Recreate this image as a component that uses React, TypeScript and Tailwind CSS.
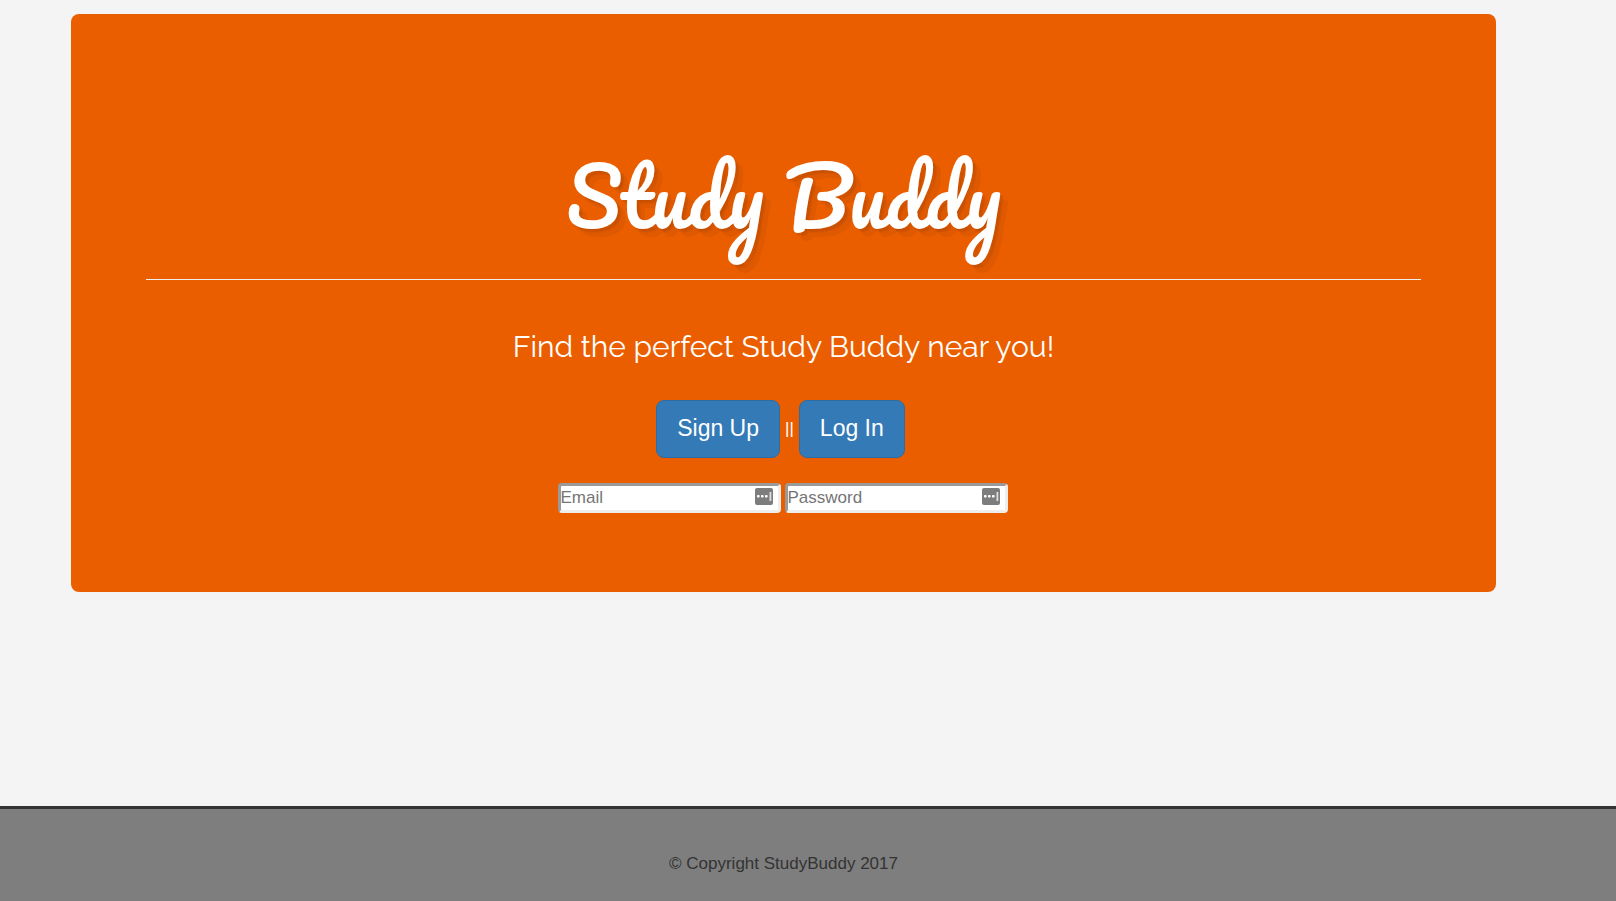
type CredentialFieldProps = {
  id: string;
  label: string;
  type: "email" | "password";
};

function AutofillIcon() {
  return (
    <svg
      aria-hidden="true"
      viewBox="0 0 18 18"
      className="pointer-events-none absolute top-1 right-2 size-[18px]"
    >
      <rect width="18" height="17" y="1" rx="2" fill="#7d7d7d" />
      <rect x="2" y="8" width="2.6" height="2.6" rx="0.8" fill="#fff" />
      <rect x="6" y="8" width="2.6" height="2.6" rx="0.8" fill="#fff" />
      <rect x="10" y="8" width="2.6" height="2.6" rx="0.8" fill="#fff" />
      <rect x="14.5" y="5" width="1.8" height="9" fill="#dedede" />
    </svg>
  );
}

function CredentialField({ id, label, type }: CredentialFieldProps) {
  return (
    <div className="relative">
      <input
        id={id}
        type={type}
        aria-label={label}
        placeholder={label}
        className="block h-[30px] w-[223px] rounded border-3 border-t-[#9a9a9a] border-r-[#eeeeee] border-b-[#eeeeee] border-l-[#9a9a9a] bg-white text-[17px] leading-6 text-black placeholder:text-[#757575]"
      />
      <AutofillIcon />
    </div>
  );
}

export default function App() {
  return (
    <div className="flex min-h-screen flex-col bg-[#f4f4f4] font-['Liberation_Sans',Arial,sans-serif] text-[#333333]">
      <main className="grow pt-3.5 pr-[120px] pl-[71px]">
        <section className="rounded-lg bg-[#eb5e00] px-[75px] pt-28 pb-[79px] text-center text-white">
          <h1 className="pb-[13px] font-['Pacifico','Lato',cursive] text-[79px] leading-[140px] font-medium [text-shadow:3px_3px_2px_rgba(0,0,0,0.1),8px_8px_1px_rgba(0,0,0,0.05)]">
            Study Buddy
          </h1>
          <hr className="border-t border-[#eeeeee]" />
          <p className="mt-[47px] font-['Raleway','Lato',sans-serif] text-[30px] leading-10">
            Find the perfect Study Buddy near you!
          </p>
          <div className="mt-[33px] flex items-center justify-center gap-[5px] pr-1.5 text-[17px]">
            <button
              type="button"
              className="rounded-lg border border-[#2e6da4] bg-[#337ab7] px-5 pt-[11px] pb-[13px] text-[23px] leading-8"
            >
              Sign Up
            </button>
            <span>||</span>
            <button
              type="button"
              className="rounded-lg border border-[#2e6da4] bg-[#337ab7] px-5 pt-[11px] pb-[13px] text-[23px] leading-8"
            >
              Log In
            </button>
          </div>
          <form className="mt-[25px] flex justify-center gap-1 pr-0.5">
            <CredentialField id="email" label="Email" type="email" />
            <CredentialField id="password" label="Password" type="password" />
          </form>
        </section>
      </main>
      <footer className="border-t-3 border-[#333333] bg-[#7e7e7e] pt-[42px] pr-[49px] pb-[25px] text-center text-[17px] leading-[25px]">
        <p>© Copyright StudyBuddy 2017</p>
      </footer>
    </div>
  );
}
